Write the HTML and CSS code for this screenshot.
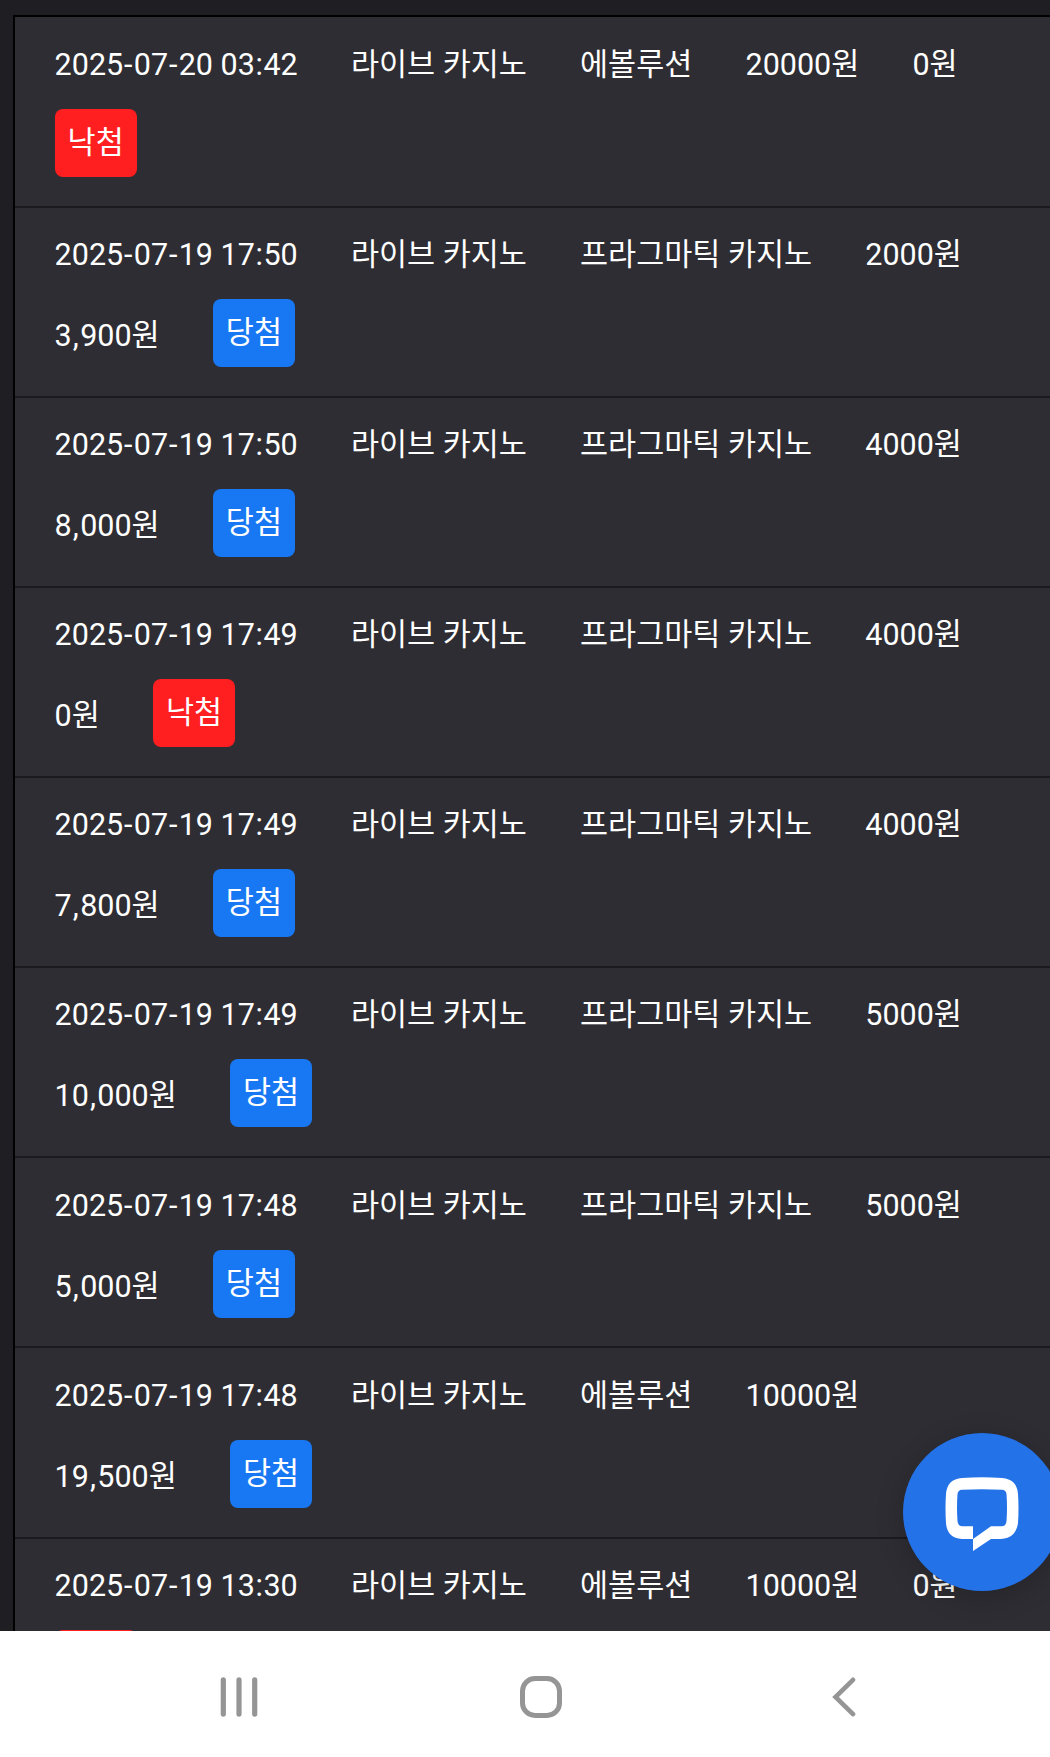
FILE: index.html
```html
<!DOCTYPE html>
<html lang="ko">
<head>
<meta charset="utf-8">
<title>베팅 내역</title>
<link rel="stylesheet" href="styles.css">
</head>
<body>
<div class="screen">
  <main class="page">
    <div class="history">
      <div class="bet"><span class="cell">2025<i class="dash">-</i>07<i class="dash">-</i>20 03<i class="colon">:</i>42</span><span class="cell">라이브 카지노</span><span class="cell">에볼루션</span><span class="cell">20000원</span><span class="cell">0원</span><span class="cell"><b class="badge lose">낙첨</b></span></div>
      <div class="bet"><span class="cell">2025<i class="dash">-</i>07<i class="dash">-</i>19 17<i class="colon">:</i>50</span><span class="cell">라이브 카지노</span><span class="cell">프라그마틱 카지노</span><span class="cell">2000원</span><span class="cell">3<i class="comma">,</i>900원</span><span class="cell"><b class="badge win">당첨</b></span></div>
      <div class="bet"><span class="cell">2025<i class="dash">-</i>07<i class="dash">-</i>19 17<i class="colon">:</i>50</span><span class="cell">라이브 카지노</span><span class="cell">프라그마틱 카지노</span><span class="cell">4000원</span><span class="cell">8<i class="comma">,</i>000원</span><span class="cell"><b class="badge win">당첨</b></span></div>
      <div class="bet"><span class="cell">2025<i class="dash">-</i>07<i class="dash">-</i>19 17<i class="colon">:</i>49</span><span class="cell">라이브 카지노</span><span class="cell">프라그마틱 카지노</span><span class="cell">4000원</span><span class="cell">0원</span><span class="cell"><b class="badge lose">낙첨</b></span></div>
      <div class="bet"><span class="cell">2025<i class="dash">-</i>07<i class="dash">-</i>19 17<i class="colon">:</i>49</span><span class="cell">라이브 카지노</span><span class="cell">프라그마틱 카지노</span><span class="cell">4000원</span><span class="cell">7<i class="comma">,</i>800원</span><span class="cell"><b class="badge win">당첨</b></span></div>
      <div class="bet"><span class="cell">2025<i class="dash">-</i>07<i class="dash">-</i>19 17<i class="colon">:</i>49</span><span class="cell">라이브 카지노</span><span class="cell">프라그마틱 카지노</span><span class="cell">5000원</span><span class="cell">10<i class="comma">,</i>000원</span><span class="cell"><b class="badge win">당첨</b></span></div>
      <div class="bet"><span class="cell">2025<i class="dash">-</i>07<i class="dash">-</i>19 17<i class="colon">:</i>48</span><span class="cell">라이브 카지노</span><span class="cell">프라그마틱 카지노</span><span class="cell">5000원</span><span class="cell">5<i class="comma">,</i>000원</span><span class="cell"><b class="badge win">당첨</b></span></div>
      <div class="bet"><span class="cell">2025<i class="dash">-</i>07<i class="dash">-</i>19 17<i class="colon">:</i>48</span><span class="cell">라이브 카지노</span><span class="cell">에볼루션</span><span class="cell">10000원</span><span class="cell">19<i class="comma">,</i>500원</span><span class="cell"><b class="badge win">당첨</b></span></div>
      <div class="bet"><span class="cell">2025<i class="dash">-</i>07<i class="dash">-</i>19 13<i class="colon">:</i>30</span><span class="cell">라이브 카지노</span><span class="cell">에볼루션</span><span class="cell">10000원</span><span class="cell">0원</span><span class="cell"><b class="badge lose">낙첨</b></span></div>
    </div>
    <button class="chat" aria-label="채팅">
      <svg width="74" height="74" viewBox="0 0 74 74" fill="#fff"><path fill-rule="evenodd" d="M17 .9Q37-.5 57 .9Q72 2 73 17Q74 31 73 46Q71 61 56 62H46L28 74V62H17Q2 61 1 46Q0 31 1 17Q2 2 17 .9ZM17 12.800Q13 13 12.500 17Q11.500 31 12.500 44Q13 49 17 49.300H28V62L46 49.300H57Q61 49 61.500 44Q62.500 31 61.500 17Q61 13 57 12.800Q37 11.500 17 12.800Z"/></svg>
    </button>
  </main>
  <nav class="navbar">
    <svg width="38" height="40" viewBox="0 0 38 40" stroke="#959595" stroke-width="5.200" stroke-linecap="round"><path d="M3.300 2.900V37.100M19 2.900V37.100M34.700 2.900V37.100"/></svg>
    <svg class="home" width="42" height="42" viewBox="0 0 42 42" fill="none" stroke="#959595" stroke-width="5"><rect x="2.500" y="2.500" width="37" height="37" rx="12.500"/></svg>
    <svg width="24" height="40" viewBox="0 0 24 40" fill="none" stroke="#959595" stroke-width="4.600" stroke-linecap="round"><path d="M21 2.800L3.500 20L21 37.200"/></svg>
  </nav>
</div>
</body>
</html>
```
FILE: styles.css
```css
body {
  margin: 0;
  background: #1f1e23;
  color: #fff;
  font-family: Roboto, "Noto Sans CJK KR", sans-serif;
  font-size: 30.5px;
  font-kerning: none;
}

.screen {
  display: flex;
  flex-direction: column;
  height: 1757px;
  overflow: hidden;
}

.page {
  position: relative;
  box-sizing: border-box;
  height: 1631px;
  padding: 15.4px 0 0 13px;
  overflow: hidden;
}

.history {
  border-top: 2px solid #000;
  border-left: 2px solid #000;
  background: #2e2d33;
}

.bet {
  display: flex;
  flex-wrap: wrap;
  align-content: flex-start;
  box-sizing: border-box;
  height: 190.16px;
  padding: 6.25px 0 0 13px;
  border-bottom: 2px solid #1b1a1f;
}

.cell {
  height: 81px;
  padding: 0 26.6px;
  line-height: 81px;
  white-space: nowrap;
}

.dash,
.colon,
.comma {
  font-style: normal;
}

.dash { margin: 0 1.4px 0 .8px; }
.colon { margin: 0 .6px; }
.comma { margin: 0 1.4px 0 1px; }

.badge {
  display: block;
  box-sizing: border-box;
  height: 68px;
  margin-top: 4px;
  padding: 0 13px;
  border-radius: 8px;
  font-weight: 400;
  line-height: 68px;
}

.lose { background: #ff1e20; }
.win { background: #1877f2; }

.chat {
  position: absolute;
  left: 903px;
  top: 1433px;
  display: flex;
  align-items: center;
  justify-content: center;
  width: 158px;
  height: 158px;
  padding: 4px 0 0;
  border: 0;
  border-radius: 50%;
  background: #2472e8;
  box-shadow: 0 6px 28px rgba(0, 0, 0, .2);
}

.navbar {
  display: flex;
  align-items: center;
  justify-content: space-between;
  box-sizing: border-box;
  height: 126px;
  padding: 6px 194px 0 220px;
  background: #fff;
}

.home {
  margin-right: 8px;
}
```
